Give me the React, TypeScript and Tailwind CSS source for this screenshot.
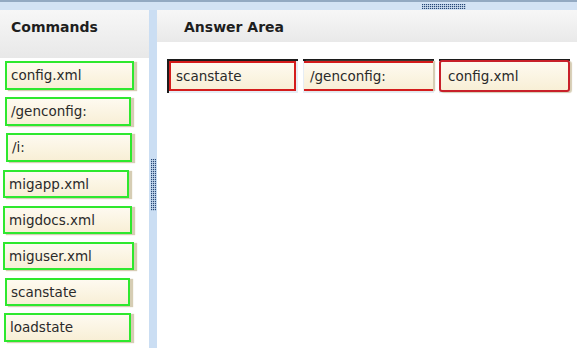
import React from "react";

const commands = [
  { label: "config.xml", cls: "ml-[5px] mt-[3px] w-[129px] h-[29px]" },
  { label: "/genconfig:", cls: "ml-[5px] mt-[7px] w-[126px] h-[29px]" },
  { label: "/i:", cls: "ml-[6px] mt-[7px] w-[126px] h-[29px]" },
  { label: "migapp.xml", cls: "ml-[3px] mt-[8px] w-[126px] h-[28px]" },
  { label: "migdocs.xml", cls: "ml-[3px] mt-[8px] w-[129px] h-[28px]" },
  { label: "miguser.xml", cls: "ml-[3px] mt-[8px] w-[131px] h-[28px]" },
  { label: "scanstate", cls: "ml-[5px] mt-[8px] w-[125px] h-[28px]" },
  { label: "loadstate", cls: "ml-[4px] mt-[7px] w-[127px] h-[29px]" },
];

function Grip({ w, h }: { w: number; h: number }) {
  return (
    <svg width={w} height={h} aria-hidden>
      <defs>
        <pattern id={`g${w}${h}`} width="2" height="2" patternUnits="userSpaceOnUse">
          <rect width="1.2" height="1.2" fill="#284878" />
        </pattern>
      </defs>
      <rect width={w} height={h} fill={`url(#g${w}${h})`} />
    </svg>
  );
}

export default function App() {
  return (
    <div
      className="flex h-[348px] w-[577px] flex-col overflow-hidden border-t-2 border-[#93a9c2] bg-[#d3e2f4] text-[13.5px] text-[#2a2a2a]"
      style={{ fontFamily: '"DejaVu Sans", Verdana, sans-serif' }}
    >
      {/* top splitter */}
      <div className="flex h-[8px] shrink-0 items-center pl-[422px]">
        <Grip w={44} h={5} />
      </div>

      <div className="flex min-h-0 flex-1">
        {/* Commands */}
        <div className="flex w-[149px] shrink-0 flex-col bg-white">
          <div className="h-[48px] bg-gradient-to-b from-[#f7f7f7] to-[#e8e8e8] pl-[11px] pt-[7px] text-[14px] font-bold text-[#1e1e1e]">
            Commands
          </div>
          {commands.map((c) => (
            <div
              key={c.label}
              className={`${c.cls} flex items-center border-2 border-[#2ee82e] bg-gradient-to-b from-[#fefaf0] to-[#f8efd6] pl-[4px] shadow-[3px_1px_1px_#d6cdb4]`}
            >
              {c.label}
            </div>
          ))}
        </div>

        {/* vertical splitter */}
        <div className="flex w-[8px] shrink-0 justify-center bg-[#cbdef3] pt-[149px]">
          <Grip w={5} h={52} />
        </div>

        {/* Answer Area */}
        <div className="flex flex-1 flex-col bg-white">
          <div className="h-[32px] bg-gradient-to-b from-[#f7f7f7] to-[#e9e9e9] pl-[27px] pt-[7px] text-[14px] font-bold text-[#1e1e1e]">
            Answer Area
          </div>
          <div className="mt-[17px] flex gap-[5px] pl-[10px]">
            <div className="h-[34px] w-[131px] border-l-2 border-t-2 border-[#1c1c1c] bg-[#e6edf5] pr-[2px]">
              <div className="flex h-[30px] items-center border-2 border-[#d41c1c] bg-gradient-to-b from-[#fefaf0] to-[#f8efd6] pl-[5px]">
                scanstate
              </div>
            </div>
            <div className="h-[34px] w-[131px] border-t-2 border-[#1c1c1c] bg-[#e6edf5] px-[1px]">
              <div className="flex h-[30px] items-center border-y-2 border-[#d41c1c] bg-gradient-to-b from-[#fefaf0] to-[#f8efd6] pl-[6px] shadow-[2px_0_1px_#d6cdb4]">
                /genconfig:
              </div>
            </div>
            <div className="h-[34px] w-[131px] border-t-2 border-[#1c1c1c] bg-[#e6edf5]">
              <div className="-mt-[1px] flex h-[32px] items-center rounded-[3px] border-2 border-[#c8202a] bg-gradient-to-b from-[#fefaf0] to-[#f8efd6] pl-[7px] shadow-[2px_1px_1px_#d6cdb4]">
                config.xml
              </div>
            </div>
          </div>
        </div>
      </div>
    </div>
  );
}
